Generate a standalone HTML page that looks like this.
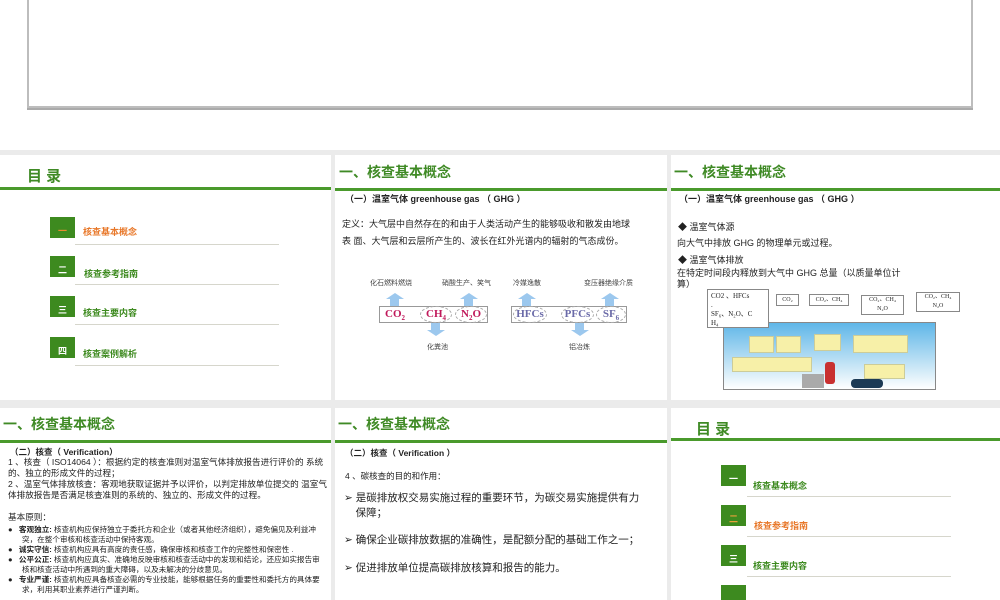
<!DOCTYPE html>
<html><head><meta charset="utf-8"><style>
*{margin:0;padding:0;box-sizing:border-box}
body{width:1000px;height:600px;position:relative;background:#fff;overflow:hidden;font-family:"Liberation Sans","Noto Sans CJK SC",sans-serif;color:#222}
.a{position:absolute;white-space:nowrap}
.s{position:absolute;background:#fff;overflow:hidden}
.gl{position:absolute;left:0;right:0;height:3px;background:#4a9a2c}
.tt{position:absolute;color:#3f8a25;font-weight:bold;font-size:14px}
.box{position:absolute;width:25px;height:21px;background:#3d8a1f;color:#fff;font-size:9px;text-align:center;line-height:28px;font-weight:bold}
.it{position:absolute;font-size:9px;font-weight:bold;color:#3d8a1f}
.ul{position:absolute;height:1px;background:#d6d6cc;width:204px}
.up{position:absolute;width:0;height:0;border-left:9px solid transparent;border-right:9px solid transparent;border-bottom:6px solid #9cc8ee}
.upb{position:absolute;width:9px;height:7px;background:#9cc8ee}
.ov{position:absolute;border:1px dashed #aaa;border-radius:50%;height:17px;font-family:"Liberation Serif",serif;font-weight:bold;font-size:11px;text-align:center;line-height:15px}
.sm{font-size:7px;color:#444}
</style></head><body>
<div style="position:absolute;left:27px;top:-2px;width:946px;height:110px;border:2px solid #bdbdbd;border-top:none;box-shadow:0 2px 0 #aaa"></div>
<div style="position:absolute;left:0;top:150px;width:1000px;height:450px;background:#ebebeb"></div>

<!-- slide 1 -->
<div class="s" style="left:0;top:155px;width:331px;height:245px">
<div class="a" style="left:27px;top:10px;font-size:15px;font-weight:bold;color:#3f8a25">目 录</div>
<div class="gl" style="top:32px"></div>
<div class="box" style="left:50px;top:62px;color:#e88b2e">一</div><div class="it" style="left:83px;top:70px;color:#e8782a">核查基本概念</div><div class="ul" style="left:75px;top:89px"></div>
<div class="box" style="left:50px;top:101px">二</div><div class="it" style="left:84px;top:112px">核查参考指南</div><div class="ul" style="left:75px;top:129px"></div>
<div class="box" style="left:50px;top:141px">三</div><div class="it" style="left:83px;top:151px">核查主要内容</div><div class="ul" style="left:75px;top:169px"></div>
<div class="box" style="left:50px;top:182px">四</div><div class="it" style="left:83px;top:192px">核查案例解析</div><div class="ul" style="left:75px;top:210px"></div>
</div>

<!-- slide 2 -->
<div class="s" style="left:335px;top:155px;width:332px;height:245px">
<div class="tt" style="left:4px;top:7px">一、核查基本概念</div>
<div class="gl" style="top:33px"></div>
<div class="a" style="left:10px;top:37px;font-size:9px;font-weight:bold">（一）温室气体  greenhouse gas （ GHG ）</div>
<div class="a" style="left:7px;top:62px;font-size:9px">定义：大气层中自然存在的和由于人类活动产生的能够吸收和散发由地球</div>
<div class="a" style="left:7px;top:79px;font-size:9px">表 面、大气层和云层所产生的、波长在红外光谱内的辐射的气态成份。</div>
<div class="a sm" style="left:35px;top:123px">化石燃料燃烧</div>
<div class="a sm" style="left:107px;top:123px">硝酸生产、笑气</div>
<div class="a sm" style="left:178px;top:123px">冷媒逸散</div>
<div class="a sm" style="left:249px;top:123px">变压器绝缘介质</div>
<div class="up" style="left:51px;top:138px"></div><div class="upb" style="left:55px;top:144px"></div>
<div class="up" style="left:125px;top:138px"></div><div class="upb" style="left:129px;top:144px"></div>
<div class="up" style="left:183px;top:138px"></div><div class="upb" style="left:187px;top:144px"></div>
<div class="up" style="left:266px;top:138px"></div><div class="upb" style="left:270px;top:144px"></div>
<div style="position:absolute;left:44px;top:151px;width:109px;height:17px;border:1px solid #999"></div>
<div style="position:absolute;left:176px;top:151px;width:116px;height:17px;border:1px solid #999"></div>
<div class="a" style="left:50px;top:153px;font-family:'Liberation Serif',serif;font-weight:bold;font-size:11px;color:#c0185a">CO<sub style="font-size:7px">2</sub></div>
<div class="ov" style="left:85px;top:151px;width:32px;color:#c0185a">CH<sub style="font-size:7px">4</sub></div>
<div class="ov" style="left:120px;top:151px;width:32px;color:#c0185a">N<sub style="font-size:7px">2</sub>O</div>
<div class="ov" style="left:178px;top:151px;width:34px;color:#6a6aa8">HFCs</div>
<div class="ov" style="left:226px;top:151px;width:33px;color:#6a6aa8">PFCs</div>
<div class="ov" style="left:261px;top:151px;width:30px;color:#6a6aa8">SF<sub style="font-size:7px">6</sub></div>
<div class="upb" style="left:96px;top:168px"></div><div class="up" style="left:92px;top:175px;transform:rotate(180deg)"></div>
<div class="upb" style="left:240px;top:168px"></div><div class="up" style="left:236px;top:175px;transform:rotate(180deg)"></div>
<div class="a sm" style="left:92px;top:187px">化粪池</div>
<div class="a sm" style="left:234px;top:187px">铝冶炼</div>
</div>

<!-- slide 3 -->
<div class="s" style="left:671px;top:155px;width:329px;height:245px">
<div class="tt" style="left:3px;top:7px">一、核查基本概念</div>
<div class="gl" style="top:33px"></div>
<div class="a" style="left:8px;top:37px;font-size:9px;font-weight:bold">（一）温室气体  greenhouse gas （ GHG ）</div>
<div class="a" style="left:7px;top:65px;font-size:9px">◆ 温室气体源</div>
<div class="a" style="left:6px;top:81px;font-size:9px">向大气中排放  GHG  的物理单元或过程。</div>
<div class="a" style="left:7px;top:98px;font-size:9px">◆ 温室气体排放</div>
<div class="a" style="left:6px;top:113px;font-size:9px;white-space:normal;width:232px;line-height:11px">在特定时间段内释放到大气中 GHG 总量（以质量单位计算）</div>
<div style="position:absolute;left:52px;top:167px;width:213px;height:68px;background:linear-gradient(#5fb6e8,#cfe9f7 70%,#fff);border:1px solid #888"></div>
<div style="position:absolute;left:36px;top:134px;width:62px;height:39px;border:1px solid #888;background:#fff;font-family:'Liberation Serif',serif;font-size:7px;padding:2px 3px;line-height:9px">CO2 、HFCs<br>.<br>SF₆、N₂O、C<br>H₄</div>
<div style="position:absolute;left:105px;top:139px;width:23px;height:12px;border:1px solid #888;font-size:6px;font-family:'Liberation Serif',serif;text-align:center;line-height:10px">CO₂</div>
<div style="position:absolute;left:138px;top:139px;width:40px;height:12px;border:1px solid #888;font-size:6px;font-family:'Liberation Serif',serif;text-align:center;line-height:10px">CO₂、CH₄</div>
<div style="position:absolute;left:190px;top:140px;width:43px;height:20px;border:1px solid #888;font-size:6px;font-family:'Liberation Serif',serif;text-align:center;line-height:9px">CO₂、CH₄<br>N₂O</div>
<div style="position:absolute;left:245px;top:137px;width:44px;height:20px;border:1px solid #888;font-size:6px;font-family:'Liberation Serif',serif;text-align:center;line-height:9px">CO₂、CH₄<br>N₂O</div>
<div style="position:absolute;left:78px;top:181px;width:25px;height:17px;background:#f7f0a8;border:1px solid #cc9"></div>
<div style="position:absolute;left:105px;top:181px;width:25px;height:17px;background:#f7f0a8;border:1px solid #cc9"></div>
<div style="position:absolute;left:143px;top:179px;width:27px;height:17px;background:#f7f0a8;border:1px solid #cc9"></div>
<div style="position:absolute;left:182px;top:180px;width:55px;height:18px;background:#f7f0a8;border:1px solid #cc9"></div>
<div style="position:absolute;left:61px;top:202px;width:80px;height:15px;background:#f7f0a8;border:1px solid #cc9"></div>
<div style="position:absolute;left:193px;top:209px;width:41px;height:15px;background:#f7f0a8;border:1px solid #cc9"></div>
<div style="position:absolute;left:154px;top:207px;width:10px;height:22px;background:#c83030;border-radius:3px"></div>
<div style="position:absolute;left:180px;top:224px;width:32px;height:9px;background:#1c3a55;border-radius:4px"></div>
<div style="position:absolute;left:131px;top:219px;width:22px;height:14px;background:#aaa"></div>
</div>

<!-- slide 4 -->
<div class="s" style="left:0;top:408px;width:331px;height:192px">
<div class="tt" style="left:3px;top:6px">一、核查基本概念</div>
<div class="gl" style="top:32px"></div>
<div class="a" style="left:10px;top:38px;font-size:8.5px;font-weight:bold">（二）核查（ Verification）</div>
<div style="position:absolute;left:8px;top:49px;width:322px;font-size:8.6px;line-height:11px">1 、核查（ ISO14064 ）：根据约定的核查准则对温室气体排放报告进行评价的 系统的、独立的形成文件的过程；<br>2 、温室气体排放核查：客观地获取证据并予以评价，以判定排放单位提交的 温室气体排放报告是否满足核查准则的系统的、独立的、形成文件的过程。<br><br>基本原则：</div>
<div style="position:absolute;left:8px;top:117px;width:316px;font-size:7.6px;line-height:10px;padding-left:14px;text-indent:-14px">
<div>●&nbsp;&nbsp; <b>客观独立:</b> 核查机构应保持独立于委托方和企业（或者其他经济组织），避免偏见及利益冲突，在整个审核和核查活动中保持客观。</div>
<div>●&nbsp;&nbsp; <b>诚实守信:</b> 核查机构应具有高度的责任感，确保审核和核查工作的完整性和保密性 .</div>
<div>●&nbsp;&nbsp; <b>公平公正:</b> 核查机构应真实、准确地反映审核和核查活动中的发现和结论，还应如实报告审核和核查活动中所遇到的重大障碍，以及未解决的分歧意见。</div>
<div>●&nbsp;&nbsp; <b>专业严谨:</b> 核查机构应具备核查必需的专业技能，能够根据任务的重要性和委托方的具体要求，利用其职业素养进行严谨判断。</div>
</div>
</div>

<!-- slide 5 -->
<div class="s" style="left:335px;top:408px;width:332px;height:192px">
<div class="tt" style="left:3px;top:6px">一、核查基本概念</div>
<div class="gl" style="top:32px"></div>
<div class="a" style="left:10px;top:39px;font-size:8.5px;font-weight:bold">（二）核查（ Verification ）</div>
<div class="a" style="left:10px;top:62px;font-size:8.5px">4 、碳核查的目的和作用：</div>
<div class="a" style="left:9px;top:83px;font-size:10.5px;line-height:15px;white-space:normal;width:320px">➢ 是碳排放权交易实施过程的重要环节，为碳交易实施提供有力<br>&nbsp;&nbsp;&nbsp;&nbsp;保障；</div>
<div class="a" style="left:9px;top:124px;font-size:10.5px">➢ 确保企业碳排放数据的准确性，是配额分配的基础工作之一；</div>
<div class="a" style="left:9px;top:152px;font-size:10.5px">➢ 促进排放单位提高碳排放核算和报告的能力。</div>
</div>

<!-- slide 6 -->
<div class="s" style="left:671px;top:408px;width:329px;height:192px">
<div class="a" style="left:25px;top:10px;font-size:15px;font-weight:bold;color:#3f8a25">目 录</div>
<div class="gl" style="top:30px"></div>
<div class="box" style="left:50px;top:57px">一</div><div class="it" style="left:82px;top:71px">核查基本概念</div><div class="ul" style="left:76px;top:88px"></div>
<div class="box" style="left:50px;top:97px;color:#e8a03a">二</div><div class="it" style="left:83px;top:111px;color:#e8782a">核查参考指南</div><div class="ul" style="left:76px;top:128px"></div>
<div class="box" style="left:50px;top:137px">三</div><div class="it" style="left:82px;top:151px">核查主要内容</div><div class="ul" style="left:76px;top:168px"></div>
<div class="box" style="left:50px;top:177px"></div>
</div>
</body></html>
